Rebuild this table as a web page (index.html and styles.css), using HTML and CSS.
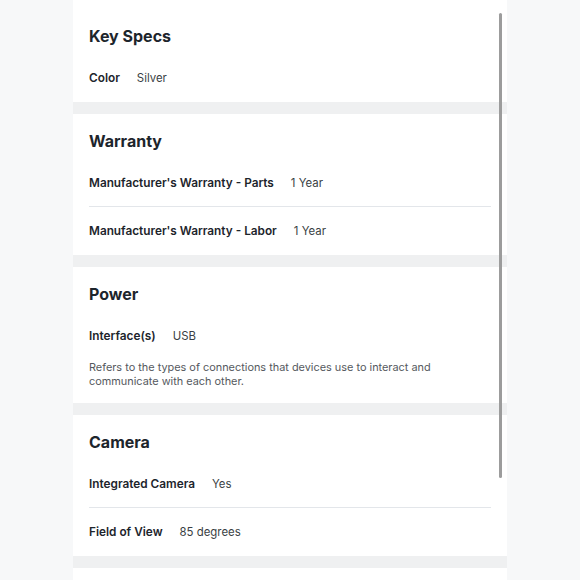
FILE: index.html
```html
<!DOCTYPE html>
<html lang="en">
<head>
<meta charset="utf-8">
<title>Specifications</title>
<link rel="stylesheet" href="styles.css">
</head>
<body>
<div class="panel">
  <section class="spec-group first">
    <h2 class="group-title">Key Specs</h2>
    <div class="spec-row"><span class="spec-label">Color</span><span class="spec-value">Silver</span></div>
  </section>
  <section class="spec-group">
    <h2 class="group-title">Warranty</h2>
    <div class="spec-row divided"><span class="spec-label">Manufacturer's Warranty - Parts</span><span class="spec-value">1 Year</span></div>
    <div class="spec-row"><span class="spec-label">Manufacturer's Warranty - Labor</span><span class="spec-value">1 Year</span></div>
  </section>
  <section class="spec-group with-desc">
    <h2 class="group-title">Power</h2>
    <div class="spec-row"><span class="spec-label">Interface(s)</span><span class="spec-value">USB</span></div>
    <p class="spec-desc">Refers to the types of connections that devices use to interact and communicate with each other.</p>
  </section>
  <section class="spec-group">
    <h2 class="group-title">Camera</h2>
    <div class="spec-row divided"><span class="spec-label">Integrated Camera</span><span class="spec-value">Yes</span></div>
    <div class="spec-row"><span class="spec-label">Field of View</span><span class="spec-value">85 degrees</span></div>
  </section>
  <section class="spec-group tail"></section>
  <div class="scroll-thumb"></div>
</div>
</body>
</html>
```
FILE: styles.css
```css
html, body {
  margin: 0;
  padding: 0;
}
body {
  background: #f7f8f9;
  font-family: "Inter", "Liberation Sans", sans-serif;
  color: #1d252c;
  height: 580px;
  overflow: hidden;
}
.panel {
  position: relative;
  width: 434px;
  margin-left: 73px;
  background: #eff0f1;
  display: flex;
  flex-direction: column;
  gap: 12px;
}
.spec-group {
  background: #ffffff;
  padding: 16px 16px 0 16px;
}
.spec-group.first {
  padding-top: 25px;
}
.group-title {
  margin: 0 0 7px 0;
  font-size: 16px;
  line-height: 22px;
  font-weight: 700;
  color: #1d252c;
}
.spec-row {
  display: flex;
  align-items: center;
  gap: 17px;
  height: 48px;
  box-sizing: border-box;
  font-size: 11.8px;
}
.spec-row.divided {
  border-bottom: 1px solid #e3e6ea;
}
.spec-label {
  font-weight: 600;
  color: #1d252c;
}
.spec-value {
  color: #3a3f44;
  font-size: 11.4px;
}
.spec-desc {
  margin: 0;
  padding-bottom: 15px;
  font-size: 10.9px;
  line-height: 14px;
  color: #55595e;
}
.tail {
  height: 60px;
}
.scroll-thumb {
  position: absolute;
  left: 426px;
  top: 13px;
  width: 3px;
  height: 465px;
  border-radius: 2px;
  background: #9c9c9c;
}
```
